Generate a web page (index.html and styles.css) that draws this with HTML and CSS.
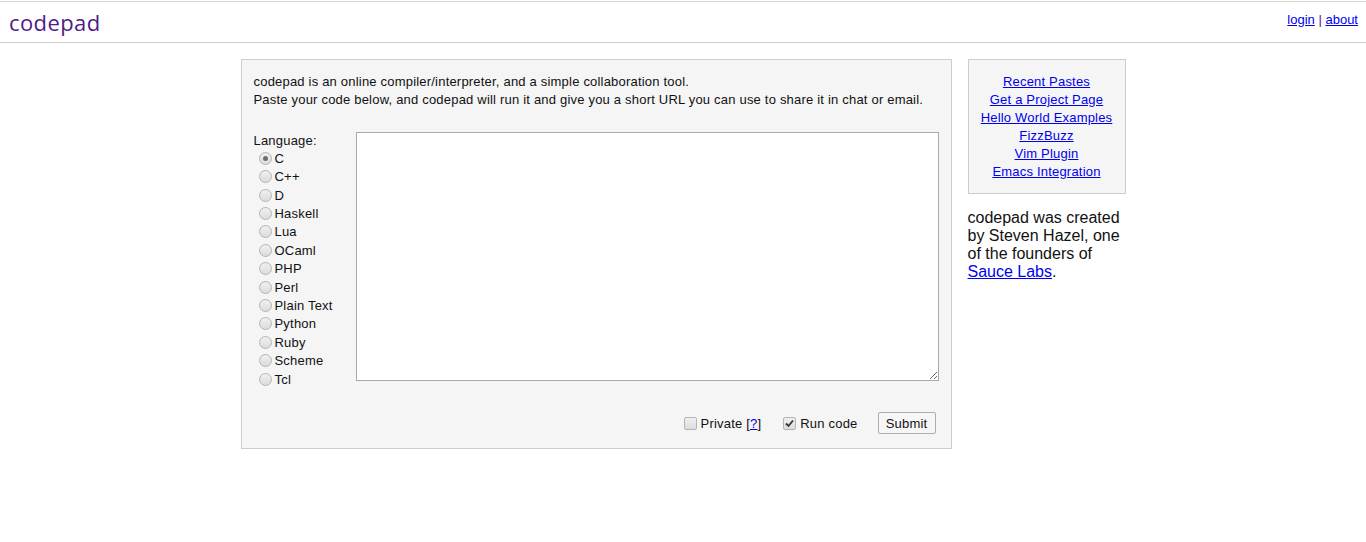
FILE: index.html
```html
<!DOCTYPE html>
<html>
<head>
<meta charset="utf-8">
<title>codepad</title>
<link rel="stylesheet" href="styles.css">
</head>
<body>
<div class="header">
  <a class="logo" href="#">codepad</a>
  <div class="toplinks"><a href="#">login</a> <span class="pipe">|</span> <a href="#">about</a></div>
</div>
<div class="wrap">
  <div class="main">
    <p class="intro">codepad is an online compiler/interpreter, and a simple collaboration tool.<br>Paste your code below, and codepad will run it and give you a short URL you can use to share it in chat or email.</p>
    <div class="form">
      <div class="langs">
        <div class="langlabel">Language:</div>
        <label class="opt"><span class="radio checked"></span>C</label>
        <label class="opt"><span class="radio"></span>C++</label>
        <label class="opt"><span class="radio"></span>D</label>
        <label class="opt"><span class="radio"></span>Haskell</label>
        <label class="opt"><span class="radio"></span>Lua</label>
        <label class="opt"><span class="radio"></span>OCaml</label>
        <label class="opt"><span class="radio"></span>PHP</label>
        <label class="opt"><span class="radio"></span>Perl</label>
        <label class="opt"><span class="radio"></span>Plain Text</label>
        <label class="opt"><span class="radio"></span>Python</label>
        <label class="opt"><span class="radio"></span>Ruby</label>
        <label class="opt"><span class="radio"></span>Scheme</label>
        <label class="opt"><span class="radio"></span>Tcl</label>
      </div>
      <textarea class="code"></textarea>
    </div>
    <div class="actions">
      <label class="check"><span class="box"></span>Private [<a href="#">?</a>]</label>
      <label class="check run"><span class="box checked"><svg width="9" height="9" viewBox="0 0 9 9"><path d="M1 4.5 L3.5 7 L8 1.5" fill="none" stroke="#333" stroke-width="1.8"/></svg></span>Run code</label>
      <button class="submit">Submit</button>
    </div>
  </div>
  <div class="side">
    <div class="sidebox">
      <a href="#">Recent Pastes</a>
      <a href="#">Get a Project Page</a>
      <a href="#">Hello World Examples</a>
      <a href="#">FizzBuzz</a>
      <a href="#">Vim Plugin</a>
      <a href="#">Emacs Integration</a>
    </div>
    <p class="credit">codepad was created by Steven Hazel, one of the founders of <a href="#">Sauce Labs</a>.</p>
  </div>
</div>
</body>
</html>
```
FILE: styles.css
```css
html, body {
  margin: 0;
  padding: 0;
  background: #fff;
}
body {
  font-family: "Liberation Sans", Arial, sans-serif;
  font-size: 13px;
  letter-spacing: 0.2px;
  color: #111;
}
a { color: #0000ee; }

.header {
  margin-top: 1px;
  border-top: 1px solid #d6d6d6;
  border-bottom: 1px solid #cccccc;
  height: 40px;
  display: flex;
  justify-content: space-between;
  align-items: flex-start;
}
.logo {
  font-family: "Open Sans", "DejaVu Sans", sans-serif;
  font-size: 22px;
  color: #4e1c88;
  text-decoration: none;
  margin-left: 9px;
  margin-top: 5px;
  letter-spacing: 0.4px;
}
.toplinks {
  margin-top: 10px;
  margin-right: 8px;
  font-size: 13px;
  letter-spacing: 0;
  color: #551a8b;
}

.wrap {
  width: 886px;
  margin: 16px auto 0;
  display: flex;
  gap: 16px;
  padding-left: 1px;
}
.main {
  width: 685px;
  background: #f5f5f5;
  border: 1px solid #cccccc;
  padding: 13px 12px 14px 12px;
}
.intro {
  margin: 0 0 22px 0;
  line-height: 18px;
}
.form {
  display: flex;
}
.langs {
  width: 102px;
  flex: none;
}
.langlabel {
  line-height: 18px;
  padding-top: 1px;
  margin-bottom: -1px;
}
.opt {
  display: flex;
  align-items: center;
  height: 18.42px;
}
.radio {
  width: 11px;
  height: 11px;
  border-radius: 50%;
  border: 1px solid #b4b4b4;
  background: linear-gradient(#f0f0f0, #dcdcdc);
  margin: 0 3px 0 5px;
  box-sizing: content-box;
  position: relative;
}
.radio.checked::after {
  content: "";
  position: absolute;
  left: 3px;
  top: 3px;
  width: 5px;
  height: 5px;
  border-radius: 50%;
  background: #6f6f6f;
}
.code {
  width: 584px;
  height: 249px;
  box-sizing: border-box;
  border: 1px solid #a9a9a9;
  background: #fff;
  margin: 1px 0 0 0;
  padding: 2px;
  resize: both;
}

.actions {
  display: flex;
  justify-content: flex-end;
  align-items: center;
  margin-top: 24px;
  padding-right: 3px;
}
.check {
  display: flex;
  align-items: center;
  margin-right: 22px;
}
.check.run { margin-right: 20px; }
.box {
  width: 11px;
  height: 11px;
  border: 1px solid #b4b4b4;
  border-radius: 2px;
  background: linear-gradient(#f0f0f0, #dcdcdc);
  margin-right: 4px;
  display: flex;
  align-items: center;
  justify-content: center;
}
.submit {
  font-family: "Liberation Sans", Arial, sans-serif;
  font-size: 13px;
  letter-spacing: 0.2px;
  color: #111;
  width: 58px;
  height: 22px;
  border: 1px solid #adadad;
  background: #f6f6f6;
  border-radius: 2px;
  padding: 0;
}

.side {
  width: 158px;
}
.sidebox {
  background: #f5f5f5;
  border: 1px solid #cccccc;
  padding: 13px 0 12px;
  display: flex;
  flex-direction: column;
  align-items: center;
  line-height: 18px;
}
.credit {
  margin: 15px 0 0 0;
  font-size: 16px;
  letter-spacing: 0;
  line-height: 18px;
  color: #111;
}
```
